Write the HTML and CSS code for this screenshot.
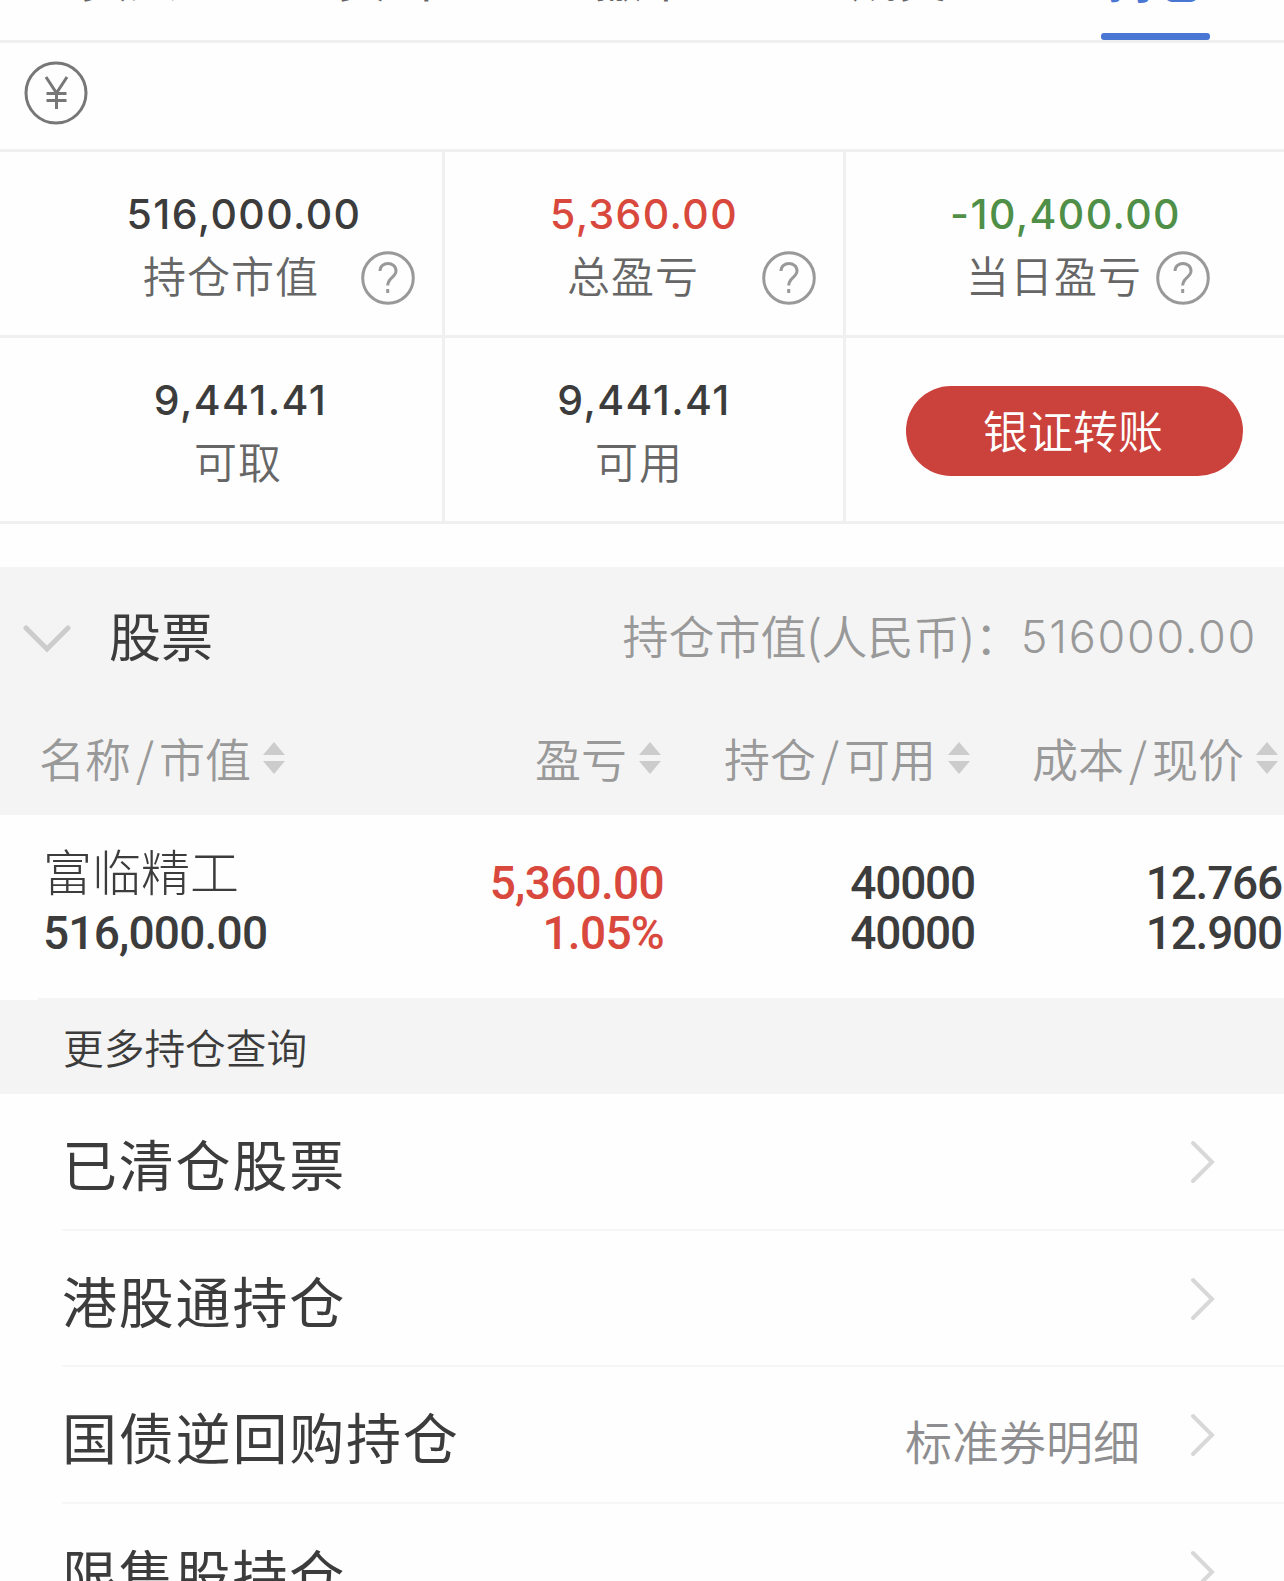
FILE: index.html
```html
<!DOCTYPE html>
<html lang="zh-CN">
<head>
  <meta charset="UTF-8">
  <meta name="viewport" content="width=device-width, initial-scale=1.0">
  <title>持仓</title>
  <link rel="stylesheet" href="styles.css">
</head>
<body>
  <nav class="tabs">
    <a class="tab">买入</a>
    <a class="tab">卖出</a>
    <a class="tab">撤单</a>
    <a class="tab">成交</a>
    <a class="tab active">持仓</a>
  </nav>

  <div class="currency">
    <svg width="64" height="64" viewBox="0 0 64 64" fill="none" stroke="#777" stroke-width="3">
      <circle cx="32" cy="32" r="30"/>
      <path d="M22 16 32.500 32 43 16M32.500 31V48M22.500 32.500H42.500M22.500 39.500H42.500"/>
    </svg>
  </div>

  <section class="summary">
    <div class="cell first">
      <div class="num">516,000.00</div>
      <div class="label">
        <span>持仓市值</span>
        <svg class="help" viewBox="0 0 54 54"><circle cx="27" cy="27" r="25.3"/><path d="M19 20C19 10 35 10 35 20C35 26 26.7 27 26.7 34.500M26.700 38V42"/></svg>
      </div>
    </div>
    <div class="cell second">
      <div class="num red">5,360.00</div>
      <div class="label">
        <span>总盈亏</span>
        <svg class="help" viewBox="0 0 54 54"><circle cx="27" cy="27" r="25.3"/><path d="M19 20C19 10 35 10 35 20C35 26 26.7 27 26.7 34.500M26.700 38V42"/></svg>
      </div>
    </div>
    <div class="cell third">
      <div class="num green">-10,400.00</div>
      <div class="label">
        <span>当日盈亏</span>
        <svg class="help" viewBox="0 0 54 54"><circle cx="27" cy="27" r="25.3"/><path d="M19 20C19 10 35 10 35 20C35 26 26.7 27 26.7 34.500M26.700 38V42"/></svg>
      </div>
    </div>
    <div class="cell first plain">
      <div class="num">9,441.41</div>
      <div class="label"><span>可取</span></div>
    </div>
    <div class="cell second plain">
      <div class="num">9,441.41</div>
      <div class="label"><span>可用</span></div>
    </div>
    <div class="cell action">
      <button class="transfer">银证转账</button>
    </div>
  </section>

  <section class="stocks">
    <div class="stocks-head">
      <svg class="chevron-down" width="48" height="30" viewBox="0 0 48 30"><path d="M3 4 24 25 45 4"/></svg>
      <h2>股票</h2>
      <div class="total"><span>持仓市值(人民币)：</span><span class="total-num">516000.00</span></div>
    </div>
    <div class="columns">
      <div class="column">名称<i>/</i>市值<svg class="sort" viewBox="0 0 22 32"><path d="M11 0 22 13H0ZM0 19H22L11 32Z"/></svg></div>
      <div class="column">盈亏<svg class="sort" viewBox="0 0 22 32"><path d="M11 0 22 13H0ZM0 19H22L11 32Z"/></svg></div>
      <div class="column">持仓<i>/</i>可用<svg class="sort" viewBox="0 0 22 32"><path d="M11 0 22 13H0ZM0 19H22L11 32Z"/></svg></div>
      <div class="column">成本<i>/</i>现价<svg class="sort" viewBox="0 0 22 32"><path d="M11 0 22 13H0ZM0 19H22L11 32Z"/></svg></div>
    </div>
  </section>

  <div class="stock">
    <div class="stock-name">
      <div class="name">富临精工</div>
      <div>516,000.00</div>
    </div>
    <div class="stock-val profit red">
      <div>5,360.00</div>
      <div>1.05%</div>
    </div>
    <div class="stock-val">
      <div>40000</div>
      <div>40000</div>
    </div>
    <div class="stock-val">
      <div>12.766</div>
      <div>12.900</div>
    </div>
  </div>
  <div class="divider"></div>

  <div class="more-title">更多持仓查询</div>

  <ul class="more">
    <li>
      <span class="more-name">已清仓股票</span>
      <svg class="arrow" viewBox="0 0 26 44"><path d="M3 3 22 22 3 41"/></svg>
    </li>
    <li>
      <span class="more-name">港股通持仓</span>
      <svg class="arrow" viewBox="0 0 26 44"><path d="M3 3 22 22 3 41"/></svg>
    </li>
    <li>
      <span class="more-name">国债逆回购持仓</span>
      <span class="more-detail">标准券明细</span>
      <svg class="arrow" viewBox="0 0 26 44"><path d="M3 3 22 22 3 41"/></svg>
    </li>
    <li>
      <span class="more-name">限售股持仓</span>
      <svg class="arrow" viewBox="0 0 26 44"><path d="M3 3 22 22 3 41"/></svg>
    </li>
  </ul>
</body>
</html>
```
FILE: styles.css
```css
* {
  box-sizing: border-box;
}

body {
  margin: 0;
  height: 1581px;
  overflow: hidden;
  background-color: #fefefe;
  color: #3c3c3c;
  font-family: "Noto Sans CJK SC", sans-serif;
}

.red {
  color: #d9483d;
}

.green {
  color: #4f8f47;
}

/* tabs */
.tabs {
  display: flex;
  height: 43px;
  border-bottom: 3px solid #f0f0f0;
}

.tab {
  flex: 1;
  display: flex;
  flex-direction: column;
  align-items: center;
  justify-content: flex-end;
  padding-bottom: 41px;
  font-size: 48px;
  line-height: 48px;
  color: #666;
}

.tab.active {
  padding-bottom: 0;
  color: #4a76d4;
  font-weight: bold;
}

.tab.active::after {
  content: "";
  flex-shrink: 0;
  width: 109px;
  height: 7px;
  margin-top: 32px;
  border-radius: 3px;
  background-color: #4a76d4;
}

.currency {
  height: 109px;
  padding: 18px 24px;
  border-bottom: 3px solid #f0f0f0;
}

/* summary */
.summary {
  display: grid;
  grid-template-columns: 445px 401px 438px;
  grid-template-rows: 186px 186px;
}

.cell {
  padding-top: 41px;
  border-right: 3px solid #f0f0f0;
  border-bottom: 3px solid #f0f0f0;
}

.cell:nth-child(3n) {
  border-right: none;
}

.num {
  font-family: Inter, sans-serif;
  font-size: 41px;
  font-weight: 450;
  line-height: 42px;
  letter-spacing: 1.4px;
  text-align: center;
}

.label {
  display: flex;
  align-items: center;
  height: 54px;
  margin-top: 16px;
  font-size: 43px;
  font-weight: 350;
  line-height: 44px;
  letter-spacing: 1px;
  color: #666;
}

.label span {
  padding-bottom: 9px;
}

.first .num {
  padding-left: 46px;
}

.first .label {
  padding: 0 27px 0 143px;
}

.second .label {
  padding: 0 27px 0 122px;
}

.third .num {
  padding-left: 1px;
}

.third .label {
  padding: 0 74px 0 120px;
}

.first.plain .num {
  padding-left: 39px;
}

.plain .label {
  justify-content: center;
  padding: 0;
}

.first.plain .label {
  padding-left: 34px;
}

.second.plain .label {
  padding-right: 10px;
}

.help {
  width: 54px;
  height: 54px;
  margin-left: auto;
  fill: none;
  stroke: #999;
  stroke-width: 3;
}

.action {
  padding: 48px 40px 0 60px;
}

.transfer {
  display: block;
  width: 337px;
  height: 90px;
  padding: 0 3px 3px 0;
  border: none;
  border-radius: 45px;
  background-color: #cb413c;
  color: #fff;
  font-family: inherit;
  font-size: 45px;
  font-weight: 350;
  line-height: 45px;
}

/* stocks */
.stocks {
  height: 248px;
  margin-top: 43px;
  background-color: #f4f4f4;
  color: #999;
}

.stocks-head {
  display: flex;
  align-items: center;
  height: 136px;
  padding: 0 27px 0 23px;
}

.chevron-down {
  margin-top: 8px;
  fill: none;
  stroke: #ccc;
  stroke-width: 5;
  stroke-linecap: round;
}

.stocks-head h2 {
  margin: 0 0 0 38px;
  color: #3c3c3c;
  font-size: 52px;
  font-weight: 400;
  line-height: 60px;
}

.total {
  display: flex;
  align-items: center;
  margin-left: auto;
  font-size: 46px;
  font-weight: 350;
  line-height: 56px;
}

.total span {
  padding-bottom: 3px;
}

.total .total-num {
  padding: 3px 0 0;
  font-family: Inter, sans-serif;
  font-size: 45px;
  font-weight: 300;
  letter-spacing: 1.7px;
}

.columns {
  display: grid;
  grid-template-columns: 286px 376px 309px 308px;
  padding-top: 22px;
}

.column {
  display: flex;
  align-items: center;
  justify-content: flex-end;
  font-size: 46px;
  font-weight: 350;
  line-height: 64px;
  white-space: nowrap;
}

.column i {
  width: 28px;
  font-style: normal;
  text-align: center;
}

.sort {
  width: 22px;
  height: 32px;
  margin: 2px 1px 0 12px;
  fill: #ccc;
}

.stock {
  display: grid;
  grid-template-columns: 320px 344px 311px 307px;
  height: 183px;
  font-family: Roboto, sans-serif;
  font-size: 46px;
  font-weight: 500;
  line-height: 50px;
  letter-spacing: -0.8px;
}

.stock-name {
  padding: 27px 0 0 43px;
}

.name {
  font-family: "Noto Sans CJK SC", sans-serif;
  font-size: 49px;
  font-weight: 300;
  line-height: 56px;
  letter-spacing: 0;
  margin-bottom: 10px;
}

.stock-val {
  padding-top: 43px;
  letter-spacing: -1.2px;
  text-align: right;
}

.stock-val.profit {
  letter-spacing: -0.7px;
}

.divider {
  height: 2px;
  margin-left: 38px;
  background-color: #f4f4f4;
}

/* more */
.more-title {
  height: 94px;
  padding-left: 63px;
  background-color: #f4f4f4;
  font-size: 40.7px;
  font-weight: 350;
  line-height: 93px;
}

.more {
  margin: 0;
  padding: 0 0 0 62px;
  list-style: none;
}

.more li {
  display: flex;
  align-items: center;
  height: 136.6px;
  padding: 2px 68px 0 0;
  border-bottom: 2px solid #f6f6f6;
}

.more-name {
  font-size: 55px;
  line-height: 60px;
  letter-spacing: 1.8px;
}

.more-detail {
  margin-left: auto;
  padding-top: 9px;
  color: #8e8e90;
  font-size: 47px;
  font-weight: 350;
  line-height: 60px;
}

.arrow {
  width: 26px;
  height: 44px;
  margin-left: auto;
  fill: none;
  stroke: #d8d8d8;
  stroke-width: 4;
  stroke-linecap: round;
}

.more-detail + .arrow {
  margin-left: 50px;
}
```
